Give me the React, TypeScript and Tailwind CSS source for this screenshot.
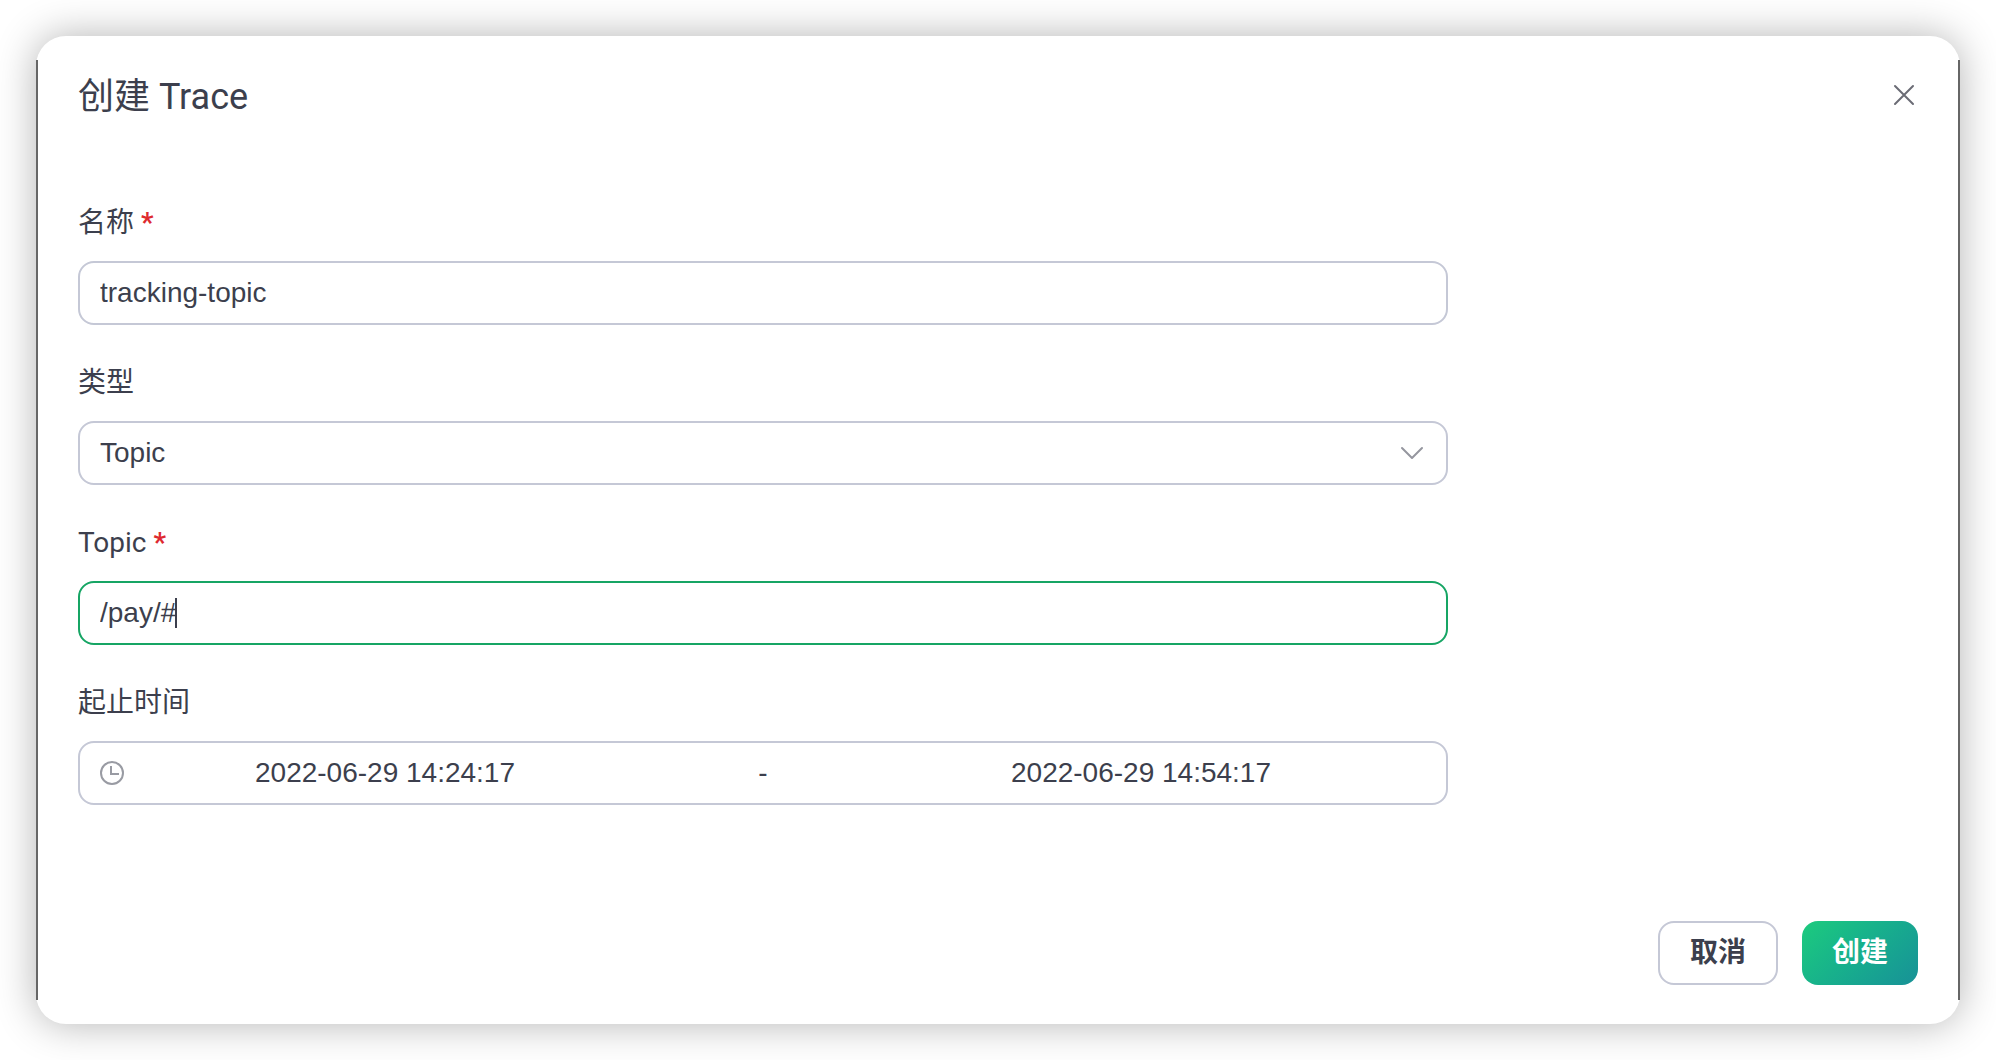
import { useEffect, useRef, useState, type ReactNode } from "react";

const control =
  "h-16 w-full rounded-2xl border-2 border-[#c5c8d6] bg-white text-[28px] leading-8 text-[#3c3f4d] outline-none";

function Field({ id, label, required, children }: { id: string; label: string; required?: boolean; children: ReactNode }) {
  return (
    <div className="flex flex-col gap-3.5">
      <label htmlFor={id} className="font-['Roboto','Noto_Sans_CJK_SC',sans-serif] text-[28px] leading-12">
        {label}
        {required && <span className="font-semibold text-[#de2a2f]"> *</span>}
      </label>
      {children}
    </div>
  );
}

export default function App() {
  const [name, setName] = useState("tracking-topic");
  const [topic, setTopic] = useState("/pay/#");
  const [start, setStart] = useState("2022-06-29 14:24:17");
  const [end, setEnd] = useState("2022-06-29 14:54:17");
  const [textWidth, setTextWidth] = useState(0);
  const topicRef = useRef<HTMLInputElement>(null);

  useEffect(() => {
    const el = topicRef.current;
    el?.focus();
    el?.setSelectionRange(el.value.length, el.value.length);
  }, []);

  useEffect(() => {
    const ctx = document.createElement("canvas").getContext("2d");
    if (!ctx) return;
    ctx.font = '28px "Liberation Sans"';
    setTextWidth(Math.floor(ctx.measureText(topic).width));
  }, [topic]);

  return (
    <div className="min-h-screen bg-white p-9 font-['Liberation_Sans','Noto_Sans_CJK_SC',sans-serif] text-[#3c3f4d]">
      <form
        role="dialog"
        aria-labelledby="dialog-title"
        onSubmit={(e) => e.preventDefault()}
        className="relative rounded-[30px] bg-white px-[42px] pt-[37px] pb-[39px] shadow-[0_0_40px_rgba(0,0,0,0.3)] before:absolute before:inset-y-6 before:left-0 before:w-0.5 before:bg-[#666666] after:absolute after:inset-y-6 after:right-0 after:w-0.5 after:bg-[#666666]"
      >
        <header className="flex items-start justify-between">
          <h1 id="dialog-title" className="font-['Roboto','Noto_Sans_CJK_SC',sans-serif] text-[36px] leading-12">
            创建 Trace
          </h1>
          <button type="button" aria-label="关闭" className="flex h-11 w-7 items-center justify-center">
            <svg viewBox="0 0 28 28" className="size-7" fill="none" stroke="#6b6c75" strokeWidth="2" strokeLinecap="round">
              <path d="M5 5l18 18M23 5L5 23" />
            </svg>
          </button>
        </header>

        <div className="mt-[78px] flex w-3/4 flex-col gap-[34px] pr-2.5">
          <Field id="name" label="名称" required>
            <input id="name" value={name} onChange={(e) => setName(e.target.value)} className={`${control} px-5`} />
          </Field>
          <Field id="type" label="类型">
            <div className="relative">
              <select id="type" defaultValue="topic" className={`${control} appearance-none px-5`}>
                <option value="topic">Topic</option>
              </select>
              <svg
                viewBox="0 0 24 24"
                className="pointer-events-none absolute inset-y-0 right-6 my-auto size-6"
                fill="none"
                stroke="#95969f"
                strokeWidth="2"
                strokeLinecap="round"
                strokeLinejoin="round"
              >
                <path d="M2 7l10 10L22 7" />
              </svg>
            </div>
          </Field>
          <Field id="topic" label="Topic" required>
            <div className="relative">
              <input
                id="topic"
                ref={topicRef}
                value={topic}
                onChange={(e) => setTopic(e.target.value)}
                className={`${control} peer px-5 caret-transparent focus:border-[#16a564]`}
              />
              <span
                aria-hidden="true"
                className="pointer-events-none absolute inset-y-0 left-[21px] my-auto hidden h-[30px] w-0.5 bg-[#3c3f4d] peer-focus:block"
                style={{ marginLeft: textWidth }}
              />
            </div>
          </Field>
          <Field id="start" label="起止时间">
            <div className={`${control} flex items-center pr-11 pl-5`}>
              <svg viewBox="0 0 24 24" className="size-6 shrink-0" fill="none" stroke="#999ba3" strokeWidth="2">
                <circle cx="12" cy="12" r="11" />
                <path d="M11 5v8h8" />
              </svg>
              <input
                id="start"
                value={start}
                onChange={(e) => setStart(e.target.value)}
                className="min-w-0 flex-1 text-center outline-none"
              />
              <span className="w-[234px] text-center">-</span>
              <input
                aria-label="结束时间"
                value={end}
                onChange={(e) => setEnd(e.target.value)}
                className="min-w-0 flex-1 text-center outline-none"
              />
            </div>
          </Field>
        </div>

        <footer className="mt-29 flex justify-end gap-6 text-[28px] leading-8 font-bold">
          <button type="button" className="h-16 rounded-2xl border-2 border-[#c5c8d6] px-[30px]">
            取消
          </button>
          <button type="submit" className="h-16 rounded-2xl bg-linear-135 from-[#1dcb7d] to-[#189197] px-[30px] text-white">
            创建
          </button>
        </footer>
      </form>
    </div>
  );
}
